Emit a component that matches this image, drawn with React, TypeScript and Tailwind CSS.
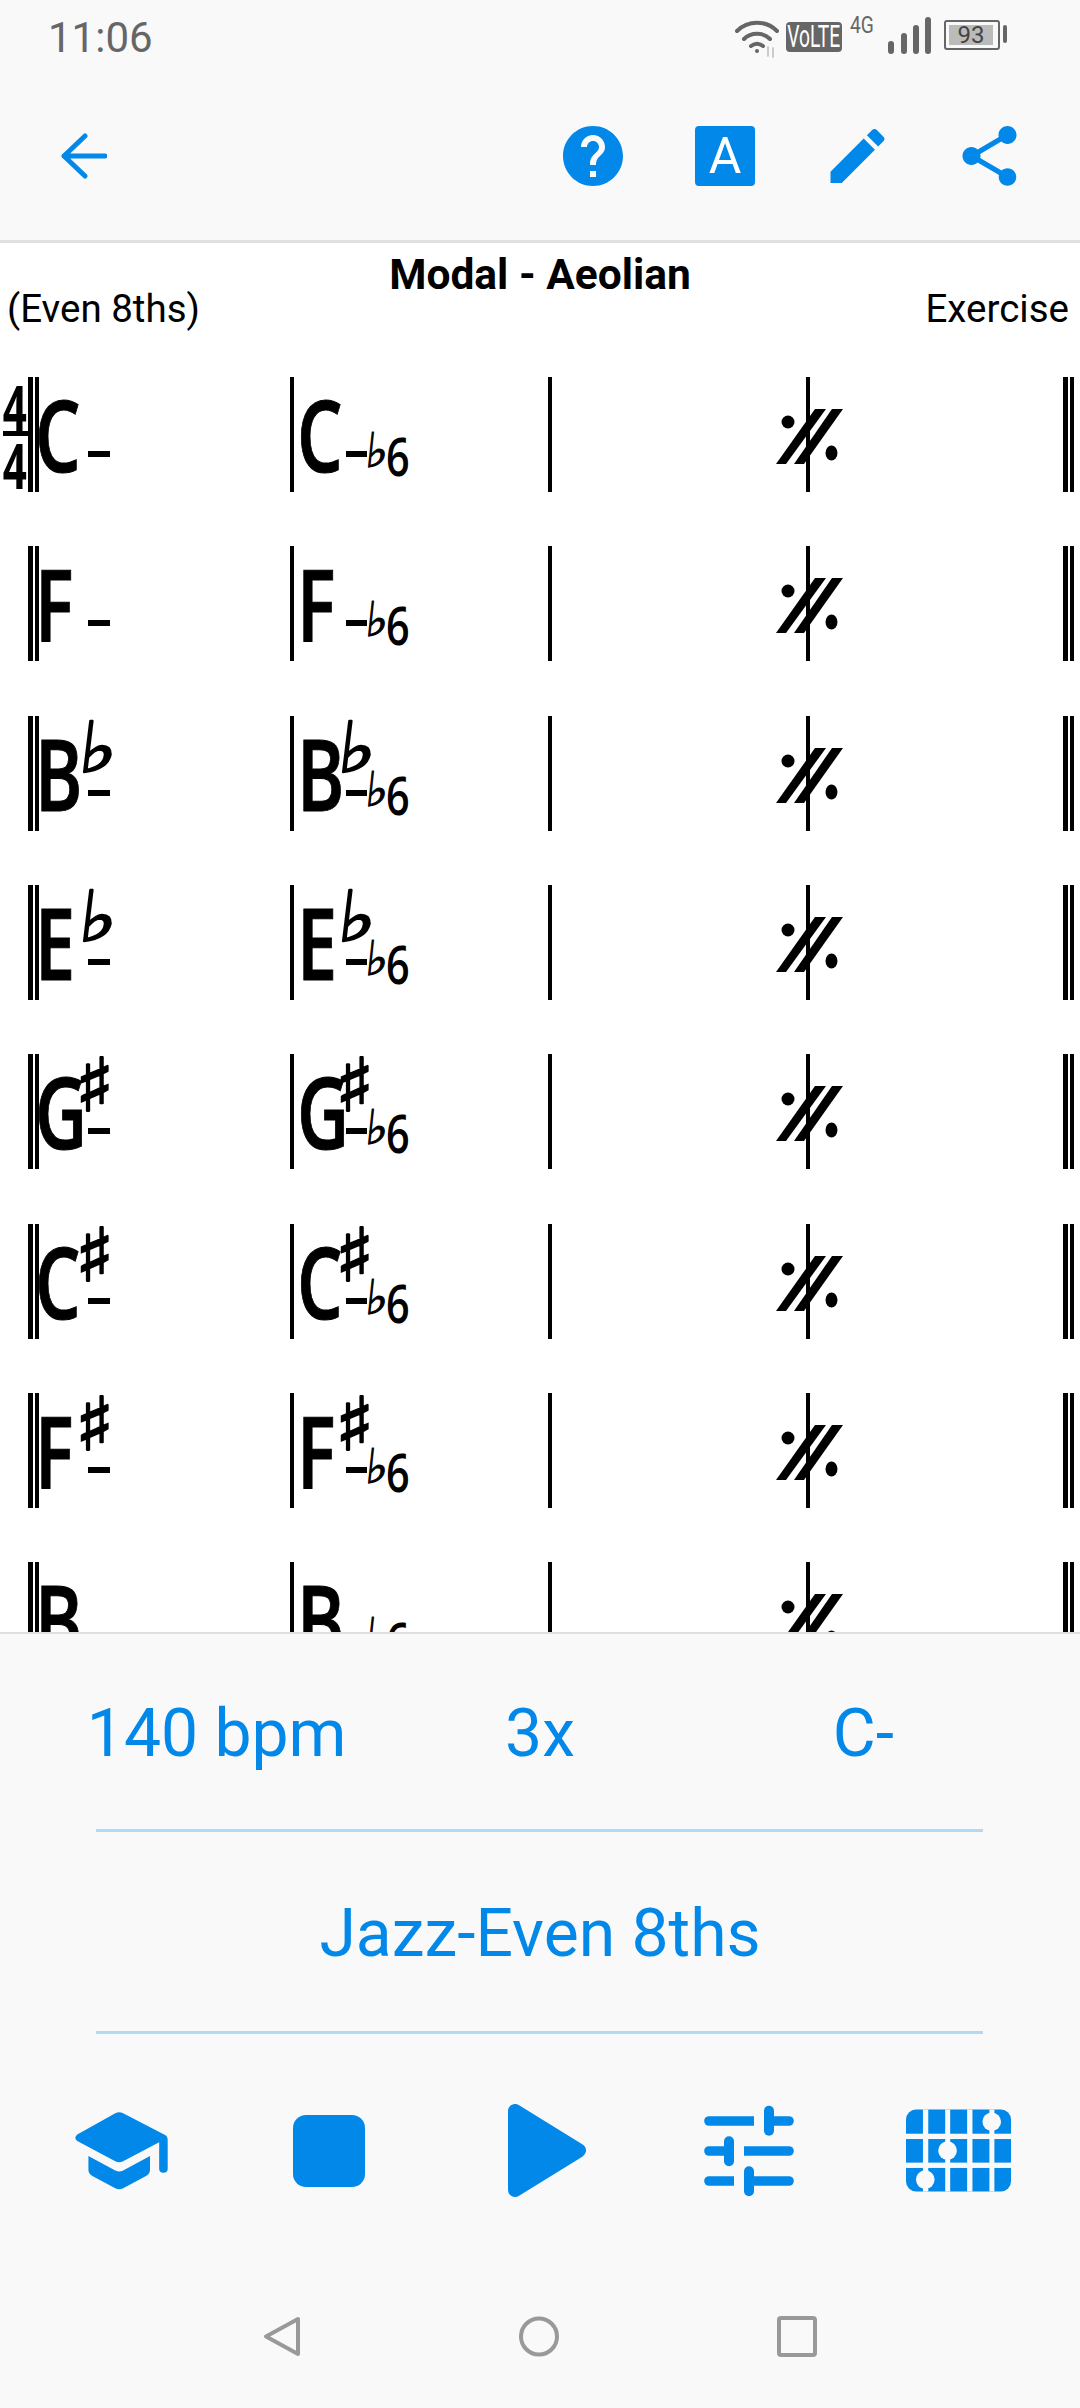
const BLUE = '#0288e8';

interface ChordKey {
  root: string;
  acc?: 'flat' | 'sharp';
}

const KEYS: ChordKey[] = [
  { root: 'C' },
  { root: 'F' },
  { root: 'B', acc: 'flat' },
  { root: 'E', acc: 'flat' },
  { root: 'G', acc: 'sharp' },
  { root: 'C', acc: 'sharp' },
  { root: 'F', acc: 'sharp' },
  { root: 'B' },
];

function DoubleBar() {
  return (
    <div className="flex h-[115px] w-[11px] shrink-0 gap-[2px]">
      <div className="h-full w-[5px] bg-black" />
      <div className="h-full w-[4px] bg-black" />
    </div>
  );
}

function Chord({ chord, flat6 }: { chord: ChordKey; flat6?: boolean }) {
  const flatLeft = flat6 ? 'left-[45px]' : 'left-[48px]';
  const sharpLeft = flat6 ? 'left-[41px]' : 'left-[43px]';
  return (
    <div className="relative h-[115px] w-[120px] font-['Open_Sans',sans-serif] text-black">
      <span className="absolute left-[3px] top-[-1px] origin-left scale-x-[0.72] text-[100px] font-semibold leading-[115px] [-webkit-text-stroke:1px_#000]">
        {chord.root}
      </span>
      {chord.acc === 'flat' && (
        <span className={`absolute ${flatLeft} top-[-2px] origin-left scale-x-[1.15] -skew-x-[6deg] font-['DejaVu_Sans',sans-serif] text-[70px] leading-[68px] [-webkit-text-stroke:2px_#000]`}>
          ♭
        </span>
      )}
      {chord.acc === 'sharp' && (
        <span className={`absolute ${sharpLeft} top-[-5px] origin-left scale-x-[1.1] font-['DejaVu_Sans',sans-serif] text-[74px] leading-[72px] [-webkit-text-stroke:2px_#000]`}>
          ♯
        </span>
      )}
      <div className={`absolute top-[74px] h-[6px] bg-black ${flat6 ? 'left-[52px] w-[21px]' : 'left-[56px] w-[22px]'}`} />
      {flat6 && (
        <>
          <span className="absolute left-[72px] top-[50px] -skew-x-[6deg] font-['DejaVu_Sans',sans-serif] text-[48px] leading-[46px] [-webkit-text-stroke:1px_#000]">
            ♭
          </span>
          <span className="absolute left-[92px] top-[45px] origin-left scale-x-[0.78] text-[53px] font-semibold leading-[68px]">
            6
          </span>
        </>
      )}
    </div>
  );
}

function RepeatSign() {
  return (
    <svg className="absolute left-[-35px] top-[30px]" width="72" height="60" viewBox="0 0 72 60" fill="black">
      <path d="M1 57 L11 57 L51 2 L40 2 Z" />
      <path d="M19 57 L29 57 L68 2 L57 2 Z" />
      <circle cx="13" cy="15" r="6.5" />
      <ellipse cx="56.5" cy="46" rx="6" ry="7.5" />
    </svg>
  );
}

function ScoreRow({ chord, first }: { chord: ChordKey; first: boolean }) {
  return (
    <div className="flex h-[169.33px] shrink-0">
      <div className="w-[28px] shrink-0">
        {first && (
          <div className="flex h-[115px] w-[28px] flex-col items-center pl-[2px] font-['Open_Sans',sans-serif] text-black">
            <span className="mt-[1px] h-[53px] origin-center scale-x-[0.68] text-[62px] font-bold leading-[58px]">4</span>
            <div className="h-[5px] w-[25px] bg-black" />
            <span className="h-[53px] origin-center scale-x-[0.68] text-[62px] font-bold leading-[58px]">4</span>
          </div>
        )}
      </div>
      <div className="flex h-[115px] w-[262px] shrink-0">
        <DoubleBar />
        <div className="-ml-[7px]">
          <Chord chord={chord} />
        </div>
      </div>
      <div className="h-[115px] w-[258px] shrink-0 border-l-[4px] border-black">
        <Chord chord={chord} flat6 />
      </div>
      <div className="h-[115px] w-[258px] shrink-0 border-l-[4px] border-black" />
      <div className="relative h-[115px] w-[257px] shrink-0 border-l-[4px] border-black">
        <RepeatSign />
      </div>
      <DoubleBar />
    </div>
  );
}

function StatusBar() {
  return (
    <div className="flex h-[70px] shrink-0 items-start font-['Roboto',sans-serif] text-[#666]">
      <span className="ml-[48px] mt-[13px] text-[42px] leading-[49px]">11:06</span>
      <div className="relative ml-auto mr-[73px] flex h-[70px] items-start">
        <svg className="mt-[20px]" width="46" height="38" viewBox="0 0 46 38" fill="none" stroke="#666" strokeWidth="4" strokeLinecap="round">
          <path d="M2 11 C13 0 31 0 42 11" />
          <path d="M9 19 C16 12 28 12 35 19" />
          <path d="M16 26 C20 23 24 23 28 26" />
          <circle cx="22" cy="31" r="2" fill="#666" stroke="none" />
          <path d="M33 36 V27 M38 28 V37" stroke="#ccc" strokeWidth="2" />
        </svg>
        <div className="ml-[5px] mt-[22px] flex h-[30px] w-[56px] items-center justify-center rounded-[4px] bg-[#666]">
          <span className="origin-center scale-x-[0.62] whitespace-nowrap text-[31px] leading-[30px] text-white">VoLTE</span>
        </div>
        <span className="ml-[8px] mt-[13px] w-[25px] origin-left scale-x-[0.8] whitespace-nowrap text-[24px] leading-[24px]">4G</span>
        <svg className="ml-[13px] mt-[17px]" width="44" height="37" viewBox="0 0 44 37" fill="#666">
          <rect x="0" y="24" width="6" height="13" rx="3" />
          <rect x="13" y="16" width="6" height="21" rx="3" />
          <rect x="25" y="8" width="6" height="29" rx="3" />
          <rect x="37" y="0" width="6" height="37" rx="3" />
        </svg>
        <div className="ml-[12px] mt-[20px] flex h-[30px] w-[56px] items-center rounded-[3px] border-2 border-[#666] p-[3px]">
          <div className="flex h-full w-[44px] items-center justify-center bg-[#bbb] text-[24px] leading-[24px] text-[#444]">93</div>
        </div>
        <div className="ml-[3px] mt-[25px] h-[18px] w-[4px] rounded-[2px] bg-[#666]" />
      </div>
    </div>
  );
}

function Toolbar() {
  return (
    <div className="flex h-[173px] shrink-0 items-center border-b-[3px] border-[#e0e0e0] pl-[61px] pr-[63px] pt-[2px]">
      <svg width="46" height="46" viewBox="0 0 46 46" fill="none" stroke={BLUE} strokeWidth="5" strokeLinecap="round" strokeLinejoin="round">
        <path d="M24 3 L3 23 L24 43 M3 23 H44" />
      </svg>
      <svg className="ml-auto" width="60" height="60" viewBox="2 2 20 20" fill={BLUE}>
        <path d="M12 2C6.48 2 2 6.48 2 12s4.48 10 10 10 10-4.48 10-10S17.52 2 12 2zm1 17h-2v-2h2v2zm2.07-7.75l-.9.92C13.45 12.9 13 13.5 13 15h-2v-.5c0-1.1.45-2.1 1.17-2.83l1.24-1.26c.37-.36.59-.86.59-1.41 0-1.1-.9-2-2-2s-2 .9-2 2H8c0-2.21 1.79-4 4-4s4 1.79 4 4c0 .88-.36 1.68-.93 2.25z" />
      </svg>
      <div className="ml-[72px] flex h-[60px] w-[60px] items-center justify-center rounded-[4px] bg-[#0288e8] font-['Roboto',sans-serif] text-[50px] font-normal leading-[60px] text-white">
        A
      </div>
      <svg className="ml-[75px]" width="55" height="54" viewBox="3 3 18 18" fill={BLUE}>
        <path d="M3 17.25V21h3.75L17.81 9.94l-3.75-3.75L3 17.25zM20.71 7.04c.39-.39.39-1.02 0-1.41l-2.34-2.34c-.39-.39-1.02-.39-1.41 0l-1.83 1.83 3.75 3.75 1.83-1.83z" />
      </svg>
      <svg className="ml-[77px]" width="55" height="60" viewBox="3 2 18 20" fill={BLUE}>
        <path d="M18 16.08c-.76 0-1.44.3-1.96.77L8.91 12.7c.05-.23.09-.46.09-.7s-.04-.47-.09-.7l7.05-4.11c.54.5 1.25.81 2.04.81 1.66 0 3-1.34 3-3s-1.34-3-3-3-3 1.34-3 3c0 .24.04.47.09.7L8.04 9.81C7.5 9.31 6.79 9 6 9c-1.66 0-3 1.34-3 3s1.34 3 3 3c.79 0 1.5-.31 2.04-.81l7.12 4.16c-.05.21-.08.43-.08.65 0 1.61 1.31 2.92 2.92 2.92 1.61 0 2.92-1.31 2.92-2.92s-1.31-2.92-2.92-2.92z" />
      </svg>
    </div>
  );
}

function SlidersIcon() {
  return (
    <svg width="90" height="92" viewBox="45 45 270 275" fill={BLUE}>
      <path d="M60 78H195V107H60a14.5 14.5 0 0 1 0-29z" />
      <path d="M255 78H300a14.5 14.5 0 0 1 0 29H255z" />
      <rect x="225" y="47" width="30" height="90" rx="15" />
      <path d="M60 168H105V197H60a14.5 14.5 0 0 1 0-29z" />
      <path d="M165 168H300a14.5 14.5 0 0 1 0 29H165z" />
      <rect x="105" y="138" width="30" height="90" rx="15" />
      <path d="M60 258H135V287H60a14.5 14.5 0 0 1 0-29z" />
      <path d="M195 258H300a14.5 14.5 0 0 1 0 29H195z" />
      <rect x="165" y="228" width="30" height="90" rx="15" />
    </svg>
  );
}

function FretboardIcon() {
  const bg = '#f9f9f9';
  return (
    <svg width="105" height="83" viewBox="652 58 316 247">
      <rect x="652" y="58" width="316" height="247" rx="30" fill={BLUE} />
      <g fill={bg}>
        <rect x="703" y="58" width="16" height="247" />
        <rect x="770" y="58" width="15" height="247" />
        <rect x="836" y="58" width="16" height="247" />
        <rect x="903" y="58" width="15" height="247" />
        <rect x="652" y="131" width="316" height="16" />
        <rect x="652" y="218" width="316" height="16" />
        <circle cx="910" cy="95" r="28" />
        <circle cx="777" cy="182" r="28" />
        <circle cx="710" cy="269" r="28" />
      </g>
    </svg>
  );
}

function BottomPanel() {
  return (
    <div className="flex flex-1 flex-col font-['Roboto',sans-serif] text-[#0288e8]">
      <div className="mt-[62px] grid grid-cols-3 px-[55px] text-center text-[66px] leading-[76px]">
        <span>140 bpm</span>
        <span>3x</span>
        <span>C-</span>
      </div>
      <div className="ml-[96px] mt-[57px] h-[3px] w-[887px] bg-[#b3daf5]" />
      <div className="mt-[64px] text-center text-[66px] leading-[76px]">Jazz-Even 8ths</div>
      <div className="ml-[96px] mt-[59px] h-[3px] w-[887px] bg-[#b3daf5]" />

      <div className="ml-[74px] mt-[70px] flex h-[93px] items-center">
        <svg width="95" height="80" viewBox="42 62 290 243" fill={BLUE}>
          <path d="M168 68 Q180 62 192 68 L320 135 Q328 139 328 150 L328 238 Q328 250 315 250 Q302 250 302 238 L302 157 L192 215 Q180 221 168 215 L52 153 Q40 143 52 133 Z" />
          <path d="M86 199 L168 243 Q180 249 192 243 L274 199 L274 240 Q274 253 262 260 L192 297 Q180 303 168 297 L98 260 Q86 253 86 240 Z" />
        </svg>
        <svg className="ml-[124px]" width="72" height="72" viewBox="0 0 72 72" fill={BLUE}>
          <rect width="72" height="72" rx="13" />
        </svg>
        <svg className="ml-[143px]" width="78" height="93" viewBox="0 0 78 93" fill={BLUE} stroke={BLUE} strokeWidth="14" strokeLinejoin="round">
          <path d="M7 7 L7 86 L71 46.5 Z" />
        </svg>
        <div className="ml-[118px]">
          <SlidersIcon />
        </div>
        <div className="ml-[112px]">
          <FretboardIcon />
        </div>
      </div>

      <div className="ml-[263px] mt-[119px] flex items-center">
        <svg width="38" height="41" viewBox="0 0 38 41" fill="none" stroke="#999" strokeWidth="4" strokeLinejoin="round">
          <path d="M35 3 L35 38 L3 20.5 Z" />
        </svg>
        <svg className="ml-[218px]" width="40" height="41" viewBox="0 0 40 41" fill="none" stroke="#999" strokeWidth="4">
          <circle cx="20" cy="20.5" r="18" />
        </svg>
        <svg className="ml-[218px]" width="40" height="41" viewBox="0 0 40 41" fill="none" stroke="#999" strokeWidth="4">
          <rect x="2" y="2" width="36" height="37" rx="2" />
        </svg>
      </div>
    </div>
  );
}

export default function App() {
  return (
    <div className="flex h-[2408px] w-[1080px] flex-col overflow-hidden bg-[#f9f9f9]">
      <StatusBar />
      <Toolbar />

      <div className="flex h-[1391px] shrink-0 flex-col overflow-hidden border-b-[2px] border-[#e0e0e0] bg-white">
        <div className="h-[134px] shrink-0 pt-[9px] font-['Roboto',sans-serif] text-black">
          <div className="text-center text-[42.5px] font-bold leading-[46px]">Modal - Aeolian</div>
          <div className="-mt-[11px] flex justify-between pl-[7px] pr-[11px] text-[38.5px] leading-[44px]">
            <span>(Even 8ths)</span>
            <span>Exercise</span>
          </div>
        </div>
        {KEYS.map((chord, i) => (
          <ScoreRow key={i} chord={chord} first={i === 0} />
        ))}
      </div>

      <BottomPanel />
    </div>
  );
}
